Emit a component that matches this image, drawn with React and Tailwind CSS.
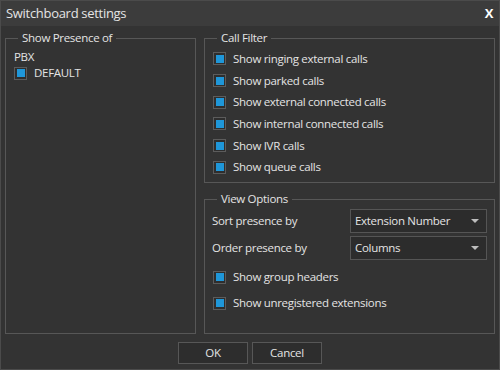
import React from 'react';

const font = { fontFamily: '"Open Sans", "Noto Sans", sans-serif' };

function Check({ label }) {
  return (
    <div className="flex items-center gap-[7px] leading-[16px]">
      <span className="flex h-[13px] w-[13px] items-center justify-center border border-[#5c5c5c] bg-[#2e2e2e]">
        <span className="h-[8px] w-[8px] bg-[#1f97d9]" />
      </span>
      <span>{label}</span>
    </div>
  );
}

function Group({ title, className, children }) {
  return (
    <fieldset className={`border border-[#575757] px-[7px] ${className}`}>
      <legend className="ml-[5px] px-[4px] leading-[16px]">{title}</legend>
      {children}
    </fieldset>
  );
}

function Select({ value }) {
  return (
    <div className="flex h-[24px] w-[137px] items-center justify-between border border-[#555] bg-[#2c2c2c] pl-[4px] pr-[7px]">
      <span>{value}</span>
      <svg width="8" height="5" viewBox="0 0 8 5">
        <path d="M0 0h8L4 4z" fill="#bdbdbd" />
      </svg>
    </div>
  );
}

export default function App() {
  const filters = [
    'Show ringing external calls',
    'Show parked calls',
    'Show external connected calls',
    'Show internal connected calls',
    'Show IVR calls',
    'Show queue calls',
  ];

  return (
    <div
      style={font}
      className="flex h-[370px] w-[500px] flex-col border border-[#4b4b4b] bg-[#333333] text-[11.5px] tracking-[-0.3px] text-[#e4e4e4]"
    >
      <div className="flex h-[25px] shrink-0 items-center justify-between bg-[#3c3c3c] pl-[5px] pr-[6px]">
        <span className="text-[13px]">Switchboard settings</span>
        <span className="text-[13px] font-bold text-white">X</span>
      </div>

      <div className="flex flex-1 flex-col px-[4px] pt-[4px]">
        <div className="flex h-[304px] gap-[8px]">
          <Group title="Show Presence of" className="w-[191px]">
            <div className="pt-[3px] pl-[1px] leading-[16px]">PBX</div>
            <div className="pl-[1px]">
              <Check label="DEFAULT" />
            </div>
          </Group>

          <div className="flex flex-1 flex-col gap-[8px]">
            <Group title="Call Filter" className="h-[153px]">
              <div className="flex flex-col pt-[2px] pl-[1px]">
                {filters.map((f) => (
                  <div key={f} className="flex h-[21.7px] items-center">
                    <Check label={f} />
                  </div>
                ))}
              </div>
            </Group>

            <Group title="View Options" className="flex-1">
              <div className="flex flex-col pt-[2px]">
                <div className="flex items-center justify-between">
                  <span>Sort presence by</span>
                  <Select value="Extension Number" />
                </div>
                <div className="mt-[3px] flex items-center justify-between">
                  <span>Order presence by</span>
                  <Select value="Columns" />
                </div>
                <div className="mt-[9px] pl-[1px]">
                  <Check label="Show group headers" />
                </div>
                <div className="mt-[10px] pl-[1px]">
                  <Check label="Show unregistered extensions" />
                </div>
              </div>
            </Group>
          </div>
        </div>

        <div className="mt-[8px] flex justify-center gap-[4px]">
          <button className="h-[22px] w-[70px] border border-[#575757] bg-[#2d2d2d]">OK</button>
          <button className="h-[22px] w-[70px] border border-[#575757] bg-[#2d2d2d]">Cancel</button>
        </div>
      </div>
    </div>
  );
}
